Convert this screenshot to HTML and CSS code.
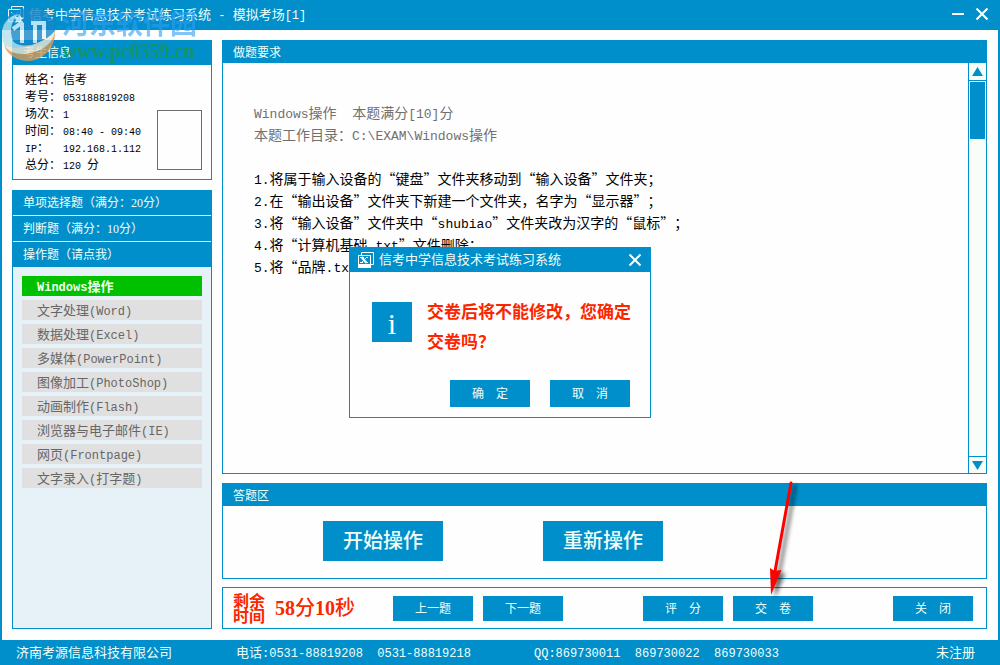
FILE: index.html
```html
<!DOCTYPE html>
<html lang="zh-CN">
<head>
<meta charset="utf-8">
<title>信考中学信息技术考试练习系统</title>
<link rel="stylesheet" href="styles.css">
</head>
<body>
<div class="window">
  <header class="titlebar">
    <svg class="app-icon" width="16" height="16" viewBox="0 0 16 16"><path d="M3.500 3V.500h12v12H13M.5 3.500h12v12H.5z" fill="none" stroke="#e6faff"/><path d="M3 6l7 7M10 6l-7 7" stroke="#e6faff"/></svg>
    <h1 class="title">信考中学信息技术考试练习系统<span class="en"> - </span>模拟考场<span class="en">[1]</span></h1>
    <button class="win-btn" aria-label="最小化"><svg width="14" height="14" viewBox="0 0 14 14"><path d="M1 7h12" stroke="#fff" stroke-width="2"/></svg></button>
    <button class="win-btn" aria-label="关闭窗口"><svg width="14" height="14" viewBox="0 0 14 14"><path d="M1.500 1.500l11 11M12.500 1.500l-11 11" stroke="#fff" stroke-width="2"/></svg></button>
  </header>

  <main class="main">
    <aside class="sidebar">
      <section class="panel">
        <h2 class="panel-head info-head">考生信息</h2>
        <div class="info">
          <dl class="info-list">
            <dt>姓名：</dt><dd>信考</dd>
            <dt>考号：</dt><dd><span class="en">053188819208</span></dd>
            <dt>场次：</dt><dd><span class="en">1</span></dd>
            <dt>时间：</dt><dd><span class="en">08:40 - 09:40</span></dd>
            <dt><span class="en">IP</span>：</dt><dd><span class="en">192.168.1.112</span></dd>
            <dt>总分：</dt><dd><span class="en">120 </span>分</dd>
          </dl>
          <div class="photo"></div>
        </div>
      </section>
      <nav class="panel nav">
        <button class="group">单项选择题（满分：<span class="digits">20</span>分）</button>
        <button class="group">判断题（满分：<span class="digits">10</span>分）</button>
        <button class="group">操作题（请点我）</button>
        <div class="items">
          <button class="item active"><span class="en">Windows</span>操作</button>
          <button class="item">文字处理<span class="en">(Word)</span></button>
          <button class="item">数据处理<span class="en">(Excel)</span></button>
          <button class="item">多媒体<span class="en">(PowerPoint)</span></button>
          <button class="item">图像加工<span class="en">(PhotoShop)</span></button>
          <button class="item">动画制作<span class="en">(Flash)</span></button>
          <button class="item">浏览器与电子邮件<span class="en">(IE)</span></button>
          <button class="item">网页<span class="en">(Frontpage)</span></button>
          <button class="item">文字录入<span class="en">(</span>打字题<span class="en">)</span></button>
        </div>
      </nav>
    </aside>

    <div class="content">
      <section class="panel task">
        <h2 class="panel-head">做题要求</h2>
        <div class="task-body">
          <div class="task-text">
            <p class="muted"><span class="en">Windows</span>操作<span class="en">  </span>本题满分<span class="en">[10]</span>分</p>
            <p class="muted intro-end">本题工作目录：<span class="en">C:\EXAM\Windows</span>操作</p>
            <p><span class="en">1.</span>将属于输入设备的“键盘”文件夹移动到“输入设备”文件夹；</p>
            <p><span class="en">2.</span>在“输出设备”文件夹下新建一个文件夹，名字为“显示器”；</p>
            <p><span class="en">3.</span>将“输入设备”文件夹中“<span class="en">shubiao</span>”文件夹改为汉字的“鼠标”；</p>
            <p><span class="en">4.</span>将“计算机基础<span class="en">.txt</span>”文件删除；</p>
            <p><span class="en">5.</span>将“品牌<span class="en">.txt</span>”</p>
          </div>
          <div class="scrollbar">
            <button class="scroll-btn up" aria-label="向上滚动"><svg width="11" height="9" viewBox="0 0 11 9"><path d="M5.500 0L11 9H0z" fill="#008fcb"/></svg></button>
            <div class="track"><div class="thumb"></div></div>
            <button class="scroll-btn down" aria-label="向下滚动"><svg width="11" height="9" viewBox="0 0 11 9"><path d="M5.500 9L11 0H0z" fill="#008fcb"/></svg></button>
          </div>
        </div>
      </section>

      <section class="panel answer">
        <h2 class="panel-head">答题区</h2>
        <div class="answer-body">
          <button class="btn big">开始操作</button>
          <button class="btn big">重新操作</button>
        </div>
      </section>

      <section class="panel controls">
        <div class="timer-label">剩余<br>时间</div>
        <div class="timer"><span class="digits">58</span>分<span class="digits">10</span>秒</div>
        <div class="btn-group">
          <button class="btn">上一题</button>
          <button class="btn">下一题</button>
        </div>
        <div class="btn-group right">
          <button class="btn">评　分</button>
          <button class="btn">交　卷</button>
        </div>
        <button class="btn close">关　闭</button>
      </section>
    </div>
  </main>

  <footer class="footer">
    <span>济南考源信息科技有限公司</span>
    <span>电话<span class="en">:0531-88819208  0531-88819218</span></span>
    <span><span class="en">QQ:869730011  869730022  869730033</span></span>
    <span>未注册</span>
  </footer>
</div>

<div class="overlay">
  <div class="dialog" role="dialog" aria-labelledby="dialog-title">
    <div class="dialog-head">
      <svg class="dialog-icon" width="16" height="16" viewBox="0 0 16 16"><path d="M3.500 3V.500h12v12H13" fill="none" stroke="#fff"/><path d="M0 3h13v13H0z" fill="#fff"/><path d="M1 4h11v8H1z" fill="#008fcb"/><path d="M3.500 5l5 6" stroke="#fff" stroke-width="2"/><path d="M9 5l-6 6M2 5.500h4M8 5.500h2M2 10.500h3M7 10.500h3" stroke="#fff"/></svg>
      <h2 id="dialog-title">信考中学信息技术考试练习系统</h2>
      <button class="win-btn" aria-label="关闭对话框"><svg width="14" height="14" viewBox="0 0 14 14"><path d="M1.500 1.500l11 11M12.500 1.500l-11 11" stroke="#fff" stroke-width="2"/></svg></button>
    </div>
    <div class="dialog-body">
      <div class="dialog-info">i</div>
      <p class="dialog-msg">交卷后将不能修改，您确定交卷吗？</p>
    </div>
    <div class="dialog-actions">
      <button class="btn">确　定</button>
      <button class="btn">取　消</button>
    </div>
  </div>
</div>

<div class="watermark">
  <svg width="56" height="58" viewBox="0 0 56 58">
    <g opacity=".8">
      <path d="M6 15C14 6 24 4 36 5C47 7 54 16 54 29L48 42H12C7 34 4 24 6 15z" fill="#1687cb"/>
      <path d="M1 34C0 21 7 13 18 11C10 18 8 27 12 38C16 43 24 43 30 42C20 48 6 46 3 42z" fill="#b4e2ee"/>
      <path d="M3 42C16 48 42 42 54 28C55 44 43 57 28 58C16 58 6 52 3 42z" fill="#d99a55"/>
      <path d="M3 42C16 48 42 42 54 28C52 43 37 50 22 51C12 51 6 47 3 42z" fill="#f1e5d5"/>
      <path d="M21 20V40M12 26L22 19M34 20V40M30 20H43V36" fill="none" stroke="#e6f6fb" stroke-width="4"/>
      <path d="M18 11l2 3 3 1-3 2 0 4-3-2-3 1 1-3-2-3 4 0z" fill="#d6f4fb"/>
    </g>
  </svg>
  <div class="watermark-text">
    <div class="watermark-name">河东软件园</div>
    <div class="watermark-url">www.pc0359.cn</div>
  </div>
</div>

<svg class="arrow" width="50" height="130" viewBox="0 0 50 130">
  <path d="M31 7L14.500 98" stroke="#f00" stroke-width="3" stroke-linecap="round"/>
  <path d="M10 92L14.500 95L21.500 94L11 119z" fill="#f00"/>
</svg>
</body>
</html>
```

FILE: styles.css
```css
* {
  box-sizing: border-box;
  margin: 0;
  padding: 0;
}

body {
  font-family: "Noto Sans CJK SC", sans-serif;
  font-size: 12px;
  text-spacing-trim: space-all;
  color: #000;
  background: #008fcb;
}

button {
  font: inherit;
  color: inherit;
  background: none;
  border: 0;
}

h1, h2 {
  font-size: 13px;
  font-weight: normal;
}

svg {
  display: block;
}

.en {
  font-family: "Liberation Mono", monospace;
  line-height: 1;
  white-space: pre;
}

.digits {
  font-family: "Liberation Serif", serif;
  line-height: 1;
}

.window {
  display: flex;
  flex-direction: column;
  min-height: 100vh;
}

.titlebar {
  display: flex;
  align-items: center;
  height: 30px;
  padding: 0 11px 2px 8px;
  gap: 10px;
  color: #f0fff8;
}

.title {
  flex: 1;
  margin-left: -5px;
  line-height: 20px;
  white-space: pre;
}

.title .en,
.item .en,
.footer .en {
  font-size: 12px;
}

.main {
  flex: 1;
  display: flex;
  gap: 10px;
  margin: 0 2px;
  padding: 10px 11px 11px 10px;
  background: #fefefe;
}

.sidebar {
  display: flex;
  flex-direction: column;
  gap: 10px;
  width: 200px;
}

.content {
  flex: 1;
  display: flex;
  flex-direction: column;
}

.panel {
  border: 1px solid #008fcb;
}

.panel-head {
  height: 22px;
  padding-left: 10px;
  font-size: 12px;
  line-height: 22px;
  color: #f0fff8;
  background: #008fcb;
}

.info-head {
  height: 24px;
}

.info {
  display: flex;
  justify-content: space-between;
  align-items: flex-end;
  padding: 5px 9px 7px 12px;
}

.info-list {
  display: grid;
  grid-template-columns: 38px auto;
  line-height: 17px;
  white-space: nowrap;
}

.info .en {
  font-size: 10px;
}

.photo {
  width: 45px;
  height: 60px;
  margin-bottom: 2px;
  border: 1px solid #6e6e6e;
}

.nav {
  flex: 1;
  background: #e6f2f8;
}

.group {
  display: block;
  width: 100%;
  height: 26px;
  padding: 0 0 2px 10px;
  line-height: 20px;
  text-align: left;
  color: #f0fff8;
  background: #008fcb;
  border-bottom: 1px solid #e6faff;
}

.group:nth-child(1) {
  height: 25px;
}

.group:nth-child(3) {
  height: 25px;
  border-bottom: 0;
}

.items {
  display: grid;
  gap: 4px;
  padding: 9px;
}

.item {
  height: 20px;
  padding-left: 15px;
  font-size: 13px;
  line-height: 20px;
  text-align: left;
  color: #666;
  background: #e0e0e0;
}

.item.active {
  font-weight: bold;
  color: #f0fff0;
  background: #00c000;
}

.task {
  flex: 1;
  display: flex;
  flex-direction: column;
}

.task-body {
  flex: 1;
  display: flex;
}

.task-text {
  flex: 1;
  padding: 38px 31px;
  font-size: 14px;
  line-height: 22px;
}

.task-text .en {
  font-size: 13px;
}

.muted {
  color: #707070;
}

.intro-end {
  margin-bottom: 22px;
}

.scrollbar {
  display: flex;
  flex-direction: column;
  width: 18px;
  border-left: 1px solid #008fcb;
  background: #f8fdf7;
}

.scroll-btn {
  display: grid;
  place-items: center;
  height: 17px;
}

.up {
  height: 18px;
  border-bottom: 1px solid #008fcb;
}

.down {
  border-top: 1px solid #008fcb;
}

.track {
  flex: 1;
  padding: 1px;
}

.thumb {
  height: 57px;
  background: #008fcb;
}

.answer {
  margin: 9px 0 8px;
}

.answer-body {
  display: flex;
  gap: 100px;
  padding: 15px 100px 17px;
}

.btn {
  width: 80px;
  height: 25px;
  padding-bottom: 2px;
  color: #f0fff8;
  background: #008fcb;
}

.big {
  width: 120px;
  height: 40px;
  padding-bottom: 4px;
  font-size: 20px;
  font-weight: 500;
}

.controls {
  display: flex;
  align-items: center;
  height: 42px;
  padding: 0 13px 0 10px;
  color: #fa2600;
}

.timer-label {
  width: 42px;
  font-size: 16px;
  font-weight: bold;
  line-height: 15px;
}

.timer {
  width: 118px;
  padding-bottom: 2px;
  font-size: 20px;
  font-weight: 500;
  line-height: 30px;
}

.timer .digits {
  font-weight: bold;
}

.btn-group {
  display: flex;
  gap: 10px;
}

.right {
  margin-left: auto;
}

.close {
  margin-left: 80px;
}

.footer {
  display: grid;
  grid-template-columns: 220px 298px 1fr auto;
  height: 25px;
  padding: 0 25px 0 16px;
  font-size: 13px;
  line-height: 24px;
  color: #f0fff8;
}

.win-btn {
  width: 14px;
  height: 14px;
}

.overlay {
  position: fixed;
  inset: 0;
  display: grid;
  place-items: center;
}

.dialog {
  width: 302px;
  border: 1px solid #008fcb;
  background: #fefefe;
}

.dialog-head {
  display: flex;
  align-items: center;
  gap: 5px;
  height: 24px;
  padding: 0 8px;
  color: #f0fff8;
  background: #008fcb;
}

.dialog-head h2 {
  flex: 1;
  padding-bottom: 2px;
  line-height: 20px;
}

.dialog-body {
  display: flex;
  gap: 15px;
  padding: 24px 16px 0 22px;
}

.dialog-info {
  width: 40px;
  height: 40px;
  margin-top: 6px;
  font: 30px/44px "Liberation Serif", serif;
  text-align: center;
  color: #fff;
  background: #008fcb;
}

.dialog-msg {
  flex: 1;
  font-size: 17px;
  font-weight: bold;
  line-height: 30px;
  color: #fa2600;
}

.dialog-actions {
  display: flex;
  justify-content: flex-end;
  gap: 20px;
  padding: 24px 20px 10px;
}

.dialog-actions .btn {
  height: 27px;
}

.watermark {
  position: absolute;
  top: 3px;
  left: 1px;
  display: flex;
  gap: 5px;
  pointer-events: none;
}

.watermark-name {
  margin: 4px 0 2px;
  font-size: 27px;
  font-weight: bold;
  line-height: 32px;
  color: #2f9df0;
  opacity: 0.6;
}

.watermark-url {
  font: bold 20px/20px "Liberation Serif", serif;
  color: #15955f;
  opacity: 0.9;
}

.arrow {
  position: absolute;
  top: 476px;
  left: 760px;
  filter: drop-shadow(4px 3px 2px rgba(0, 0, 0, 0.6));
  pointer-events: none;
}
```
